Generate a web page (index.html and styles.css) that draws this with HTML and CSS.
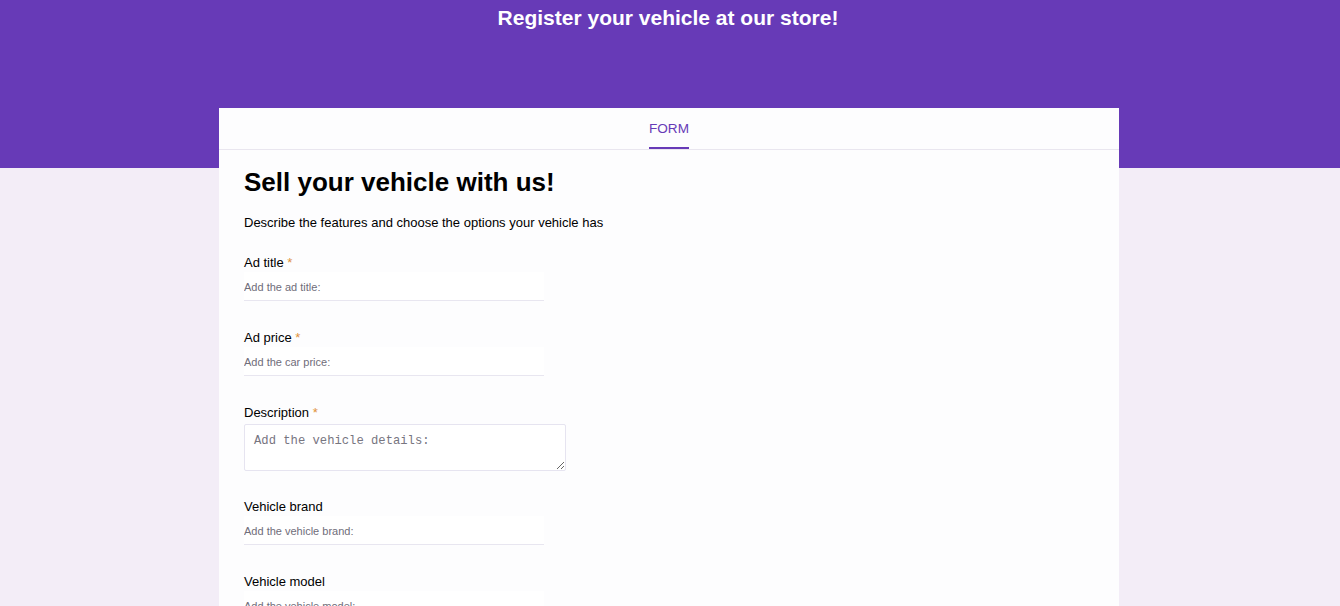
FILE: index.html
```html
<!DOCTYPE html>
<html lang="en">
<head>
<meta charset="utf-8">
<title>Register your vehicle</title>
<link rel="stylesheet" href="styles.css">
</head>
<body>
<header class="hero">
  <h2 class="hero-title">Register your vehicle at our store!</h2>
</header>
<main class="card">
  <nav class="tabs">
    <span class="tab tab-active">FORM</span>
  </nav>
  <form class="card-body">
    <h1 class="form-title">Sell your vehicle with us!</h1>
    <p class="form-desc">Describe the features and choose the options your vehicle has</p>

    <div class="field">
      <label class="field-label">Ad title <span class="req">*</span></label>
      <input class="field-input" type="text" placeholder="Add the ad title:">
    </div>

    <div class="field">
      <label class="field-label">Ad price <span class="req">*</span></label>
      <input class="field-input" type="text" placeholder="Add the car price:">
    </div>

    <div class="field field-area">
      <label class="field-label">Description <span class="req">*</span></label>
      <textarea class="field-textarea" placeholder="Add the vehicle details:"></textarea>
    </div>

    <div class="field">
      <label class="field-label">Vehicle brand</label>
      <input class="field-input" type="text" placeholder="Add the vehicle brand:">
    </div>

    <div class="field">
      <label class="field-label">Vehicle model</label>
      <input class="field-input" type="text" placeholder="Add the vehicle model:">
    </div>
  </form>
</main>
</body>
</html>
```

FILE: styles.css
```css
* { box-sizing: border-box; }

html, body {
  margin: 0;
  padding: 0;
}

body {
  background: #f3edf7;
  font-family: "Liberation Sans", Arial, sans-serif;
  color: #000;
  overflow: hidden;
}

.hero {
  background: #673ab7;
  height: 168px;
  padding: 6px 4px 0 0;
  text-align: center;
}

.hero-title {
  margin: 0;
  color: #fff;
  font-size: 21px;
  line-height: 24px;
  font-weight: bold;
}

.card {
  width: 900px;
  margin: -60px auto 0;
  position: relative;
  left: -1px;
  background: #fdfdfe;
  min-height: 600px;
}

.tabs {
  display: flex;
  justify-content: center;
  height: 42px;
  border-bottom: 1px solid #e9e6ef;
  background: #fdfdfe;
}

.tab {
  display: flex;
  align-items: center;
  height: 41px;
  padding-top: 1px;
  font-size: 13.6px;
  color: #673ab7;
  border-bottom: 2px solid #673ab7;
  margin-bottom: -1px;
}

.card-body {
  padding: 17px 25px 0;
}

.form-title {
  margin: 0;
  font-size: 26px;
  line-height: 30px;
  font-weight: bold;
}

.form-desc {
  margin: 17px 0 0;
  padding-top: 2px;
  font-size: 13px;
  line-height: 14px;
}

.field {
  display: flex;
  flex-direction: column;
  align-items: flex-start;
  margin-top: 24px;
}

.field + .field {
  margin-top: 28px;
}

.field-area + .field {
  margin-top: 27px;
}

.field-label {
  padding-top: 2px;
  font-size: 13px;
  line-height: 14px;
  color: #000;
}

.req {
  color: #e0913a;
}

.field-input {
  margin-top: 2px;
  width: 300px;
  height: 29px;
  padding: 1px 0 0;
  border: none;
  border-bottom: 1px solid #e8e6f0;
  background: #fff;
  font-family: "Liberation Sans", Arial, sans-serif;
  font-size: 11px;
  outline: none;
}

.field-input::placeholder {
  color: #6f6d7a;
}

.field-textarea {
  margin-top: 4px;
  width: 322px;
  height: 47px;
  padding: 9px 9px 7px;
  border: 1px solid #e6e4f0;
  border-radius: 2px;
  background: #fff;
  font-family: "Liberation Mono", "Courier New", monospace;
  font-size: 12.2px;
  line-height: 14px;
  display: block;
}

.field-textarea::placeholder {
  color: #77757f;
}
```
